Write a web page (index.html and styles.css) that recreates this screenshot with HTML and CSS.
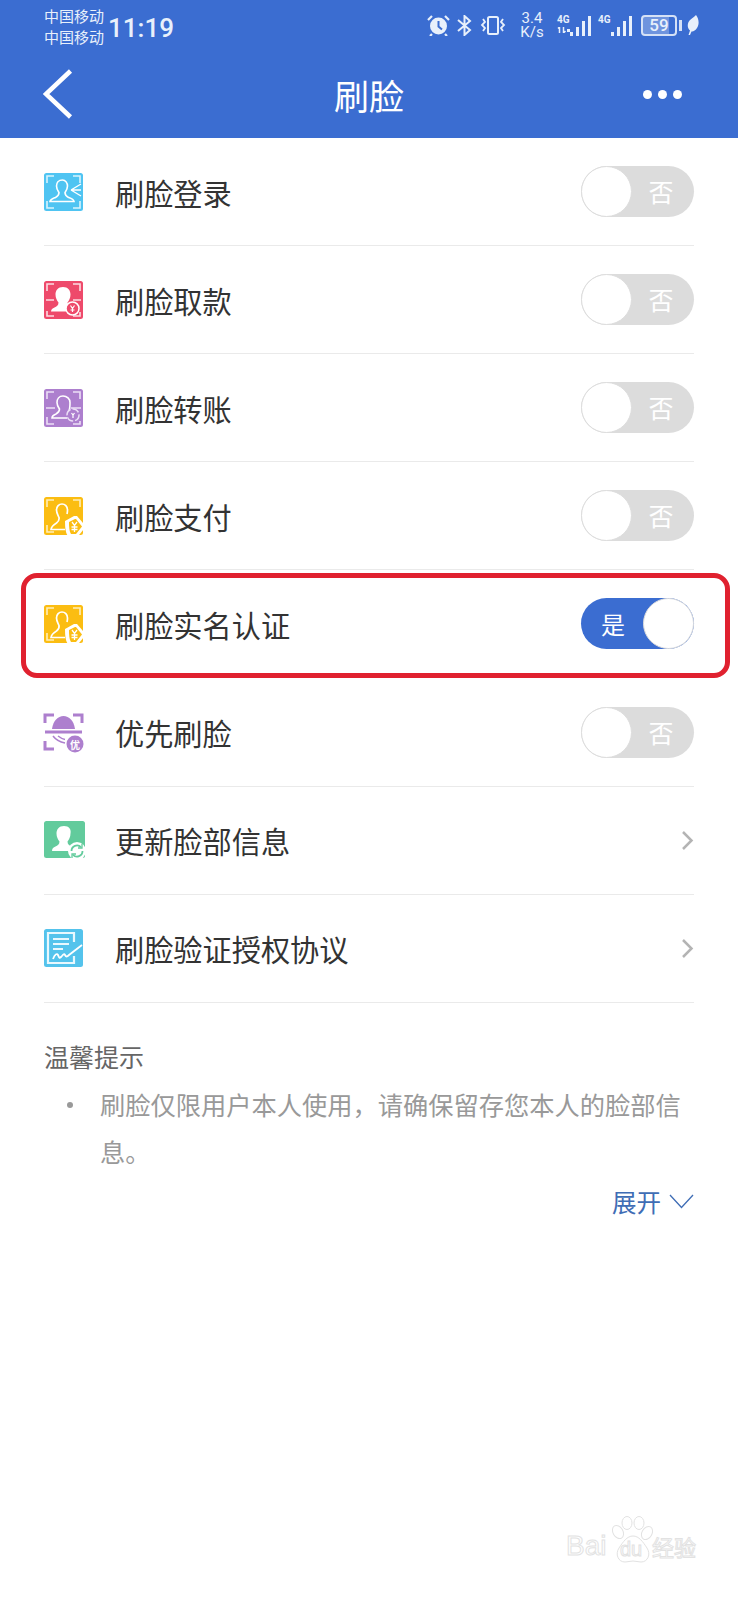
FILE: index.html
```html
<!DOCTYPE html>
<html lang="zh-CN">
<head>
<meta charset="UTF-8">
<meta name="viewport" content="width=device-width, initial-scale=1.0">
<title>刷脸</title>
<link rel="stylesheet" href="styles.css">
</head>
<body>
<div class="page">
  <header class="top">
    <div class="status">
      <div class="carrier"><span>中国移动</span><span>中国移动</span></div>
      <div class="clock">11:19</div>
      <div class="status-right">
        <svg class="st-alarm" width="23" height="22" viewBox="0 0 23 22"><circle cx="11.500" cy="12" r="8.500" fill="#e8f0fb"/><path d="M11.500 7v5.500l3.500 3" fill="none" stroke="#3b6dd1" stroke-width="2"/><path d="M1 6l4-4M22 6l-4-4M5 20l-2 2M18 20l2 2" stroke="#e8f0fb" stroke-width="2.200"/></svg>
        <svg class="st-bt" width="17" height="21" viewBox="0 0 17 21"><path d="M2 5l12 10-5.500 5V1L14 6 2 16" fill="none" stroke="#e8f0fb" stroke-width="2"/></svg>
        <svg class="st-vib" width="26" height="21" viewBox="0 0 26 21"><rect x="8" y="2" width="10" height="17" rx="1.500" fill="none" stroke="#e8f0fb" stroke-width="2"/><path d="M3 4l2 3-3 3 3 3-2 3M23 4l-2 3 3 3-3 3 2 3" fill="none" stroke="#e8f0fb" stroke-width="1.800"/></svg>
        <div class="speed"><span>3.4</span><span>K/s</span></div>
        <div class="signal signal-first">
          <div class="net"><span>4G</span><svg width="13" height="6" viewBox="0 0 13 6"><path d="M2.500 0v6M1 1.500L2.500 0M6.500 0v6l2-2" fill="none" stroke="#e8f0fb" stroke-width="1.500"/><rect x="10" y="2" width="3" height="3" fill="#e8f0fb"/></svg></div>
          <svg width="21" height="22" viewBox="0 0 21 22"><path d="M0 17h3v4H0zM6 12h3v9H6zM12 6h3v15h-3zM18 1h3v20h-3z" fill="#e8f0fb"/></svg>
        </div>
        <div class="signal signal-second">
          <div class="net"><span>4G</span></div>
          <svg width="21" height="22" viewBox="0 0 21 22"><path d="M0 17h3v4H0zM6 12h3v9H6zM12 6h3v15h-3zM18 1h3v20h-3z" fill="#e8f0fb"/></svg>
        </div>
        <div class="battery"><div class="battery-box"><span>59</span></div><div class="battery-nub"></div></div>
        <svg class="st-leaf" width="12" height="20" viewBox="0 0 12 20"><path d="M9 0c3 4 3.500 9 1 13-1.500 2.500-4 4-5.500 3.500L3 20H1.500l1.500-4.500C0 13 0 8 3 5c2-2 4.500-3 6-5z" fill="#e8f0fb"/></svg>
      </div>
    </div>
    <nav class="nav">
      <svg class="back" width="30" height="50" viewBox="0 0 30 50"><path d="M27.500 2L3 25l24.500 23" fill="none" stroke="#fff" stroke-width="4.500"/></svg>
      <h1 class="title">刷脸</h1>
      <div class="more"><i></i><i></i><i></i></div>
    </nav>
  </header>

  <main class="content">
    <ul class="list">
      <li class="row">
        <svg class="icon" width="39" height="38" viewBox="0 0 39 38"><rect width="39" height="38" rx="2.500" fill="#4fc4f2"/><path d="M3 10V3h7M29 3h7v7M3 28v7h7M29 35h7v-7" fill="none" stroke="#d8f3fd" stroke-width="1.600"/><path d="M18.500 7c-4 0-6 3-6 6 0 3 1.500 5 2.500 6.500 0 3-1.500 4-3.500 5-2 .8-5 1.500-5.500 4h24c-.5-2.500-3-3.200-5.500-4-2-1-3.500-2-3.500-5 1-1.500 2.500-3.500 2.500-6.500 0-3-2-6-5-6z" fill="none" stroke="#fff" stroke-width="1.600"/><path d="M27 17l10-6M27 17h10M27 17l10 6" fill="none" stroke="#fff" stroke-width="1.400"/></svg>
        <span class="label">刷脸登录</span>
        <div class="toggle"><div class="knob"></div><span class="toggle-text">否</span></div>
      </li>
      <li class="row">
        <svg class="icon" width="39" height="38" viewBox="0 0 39 38"><rect width="39" height="38" rx="2.500" fill="#ee4a6b"/><path d="M3 10V3h7M29 3h7v7M3 30v5h7M29 35h7v-4" fill="none" stroke="#fcdbe2" stroke-width="1.600"/><path d="M2 19h8M29 19h8" stroke="#fcdbe2" stroke-width="1.600"/><path d="M19 6c-5 0-7.500 3.500-7.500 7.500 0 3.500 1.500 6 3 8 0 3-2 4-4 5-2 .8-3.500 2-3.500 4h24c0-2-1.500-3.200-3.500-4-2-1-4-2-4-5 1.500-2 3-4.500 3-8C26.500 9.500 24 6 19 6z" fill="#fff"/><circle cx="28.500" cy="27.500" r="6.500" fill="#ee4a6b" stroke="#fff" stroke-width="1.500"/><path d="M26.500 24.500l2 3 2-3M28.500 27.500V31M26.500 29h4" fill="none" stroke="#fff" stroke-width="1.200"/></svg>
        <span class="label">刷脸取款</span>
        <div class="toggle"><div class="knob"></div><span class="toggle-text">否</span></div>
      </li>
      <li class="row">
        <svg class="icon" width="39" height="38" viewBox="0 0 39 38"><rect width="39" height="38" rx="2.500" fill="#ad7fce"/><path d="M3 10V3h7M29 3h7v7M3 28v7h7M29 35h7v-3" fill="none" stroke="#ecdff6" stroke-width="1.600"/><path d="M2 19h9M27 19h10" stroke="#ecdff6" stroke-width="1.600"/><path d="M19 7c-4 0-6 3-6 6.500 0 3 1.500 5 2.500 6.500 0 3-1.500 4-3.500 5-2 .8-4 2-4 4h15M25 22c1-2.500 1-6 1-8.500C26 10 23 7 19 7" fill="none" stroke="#fff" stroke-width="1.600"/><circle cx="29" cy="26" r="6" fill="none" stroke="#ecdff6" stroke-width="1.500" stroke-dasharray="7 2"/><path d="M27.500 24l1.500 2 1.500-2M29 26v3" fill="none" stroke="#fff" stroke-width="1.200"/></svg>
        <span class="label">刷脸转账</span>
        <div class="toggle"><div class="knob"></div><span class="toggle-text">否</span></div>
      </li>
      <li class="row">
        <svg class="icon" width="39" height="38" viewBox="0 0 39 38"><rect width="39" height="38" rx="2.500" fill="#fbbd12"/><path d="M3 10V3h7M29 3h7v7M3 28v7h7" fill="none" stroke="#ffeeb8" stroke-width="1.600"/><path d="M18 7c-3 0-5.500 2.500-5.500 6 0 3 1.500 5 2.500 7.500.5 2.500-.5 4-2.500 5.500-2.500 1.500-5 3-5.500 6.500h14M23 17c.3-1 .5-2.500.5-4 0-3.500-2.500-6-5.500-6" fill="none" stroke="#fff" stroke-width="1.700"/><path d="M21 24l9-5h3l9 10.500-9 11h-8c-3-3-4-8-4-16.500z" fill="#fff"/><path d="M25 25l6-3h1l6 7.500-6 7.500h-5c-1.500-2.500-2-6-2-12z" fill="#fbbd12"/><path d="M28 25l2.500 3.500 2.500-3.500M30.500 28.500V35M27.500 30h6M27.500 32.500h6" fill="none" stroke="#fff" stroke-width="1.300"/></svg>
        <span class="label">刷脸支付</span>
        <div class="toggle"><div class="knob"></div><span class="toggle-text">否</span></div>
      </li>
      <li class="row row-marked">
        <svg class="icon" width="39" height="38" viewBox="0 0 39 38"><rect width="39" height="38" rx="2.500" fill="#fbbd12"/><path d="M3 10V3h7M29 3h7v7M3 28v7h7" fill="none" stroke="#ffeeb8" stroke-width="1.600"/><path d="M18 7c-3 0-5.500 2.500-5.500 6 0 3 1.500 5 2.500 7.500.5 2.500-.5 4-2.500 5.500-2.500 1.500-5 3-5.500 6.500h14M23 17c.3-1 .5-2.500.5-4 0-3.500-2.500-6-5.500-6" fill="none" stroke="#fff" stroke-width="1.700"/><path d="M21 24l9-5h3l9 10.500-9 11h-8c-3-3-4-8-4-16.500z" fill="#fff"/><path d="M25 25l6-3h1l6 7.500-6 7.500h-5c-1.500-2.500-2-6-2-12z" fill="#fbbd12"/><path d="M28 25l2.500 3.500 2.500-3.500M30.500 28.500V35M27.500 30h6M27.500 32.500h6" fill="none" stroke="#fff" stroke-width="1.300"/></svg>
        <span class="label">刷脸实名认证</span>
        <div class="toggle toggle-on"><span class="toggle-text">是</span><div class="knob"></div></div>
        <div class="marker"></div>
      </li>
      <li class="row">
        <svg class="icon" width="39" height="38" viewBox="0 0 39 38"><path d="M1 10V2h9M29 2h9v8M1 28v8h9" fill="none" stroke="#ad7fce" stroke-width="3"/><path d="M8 16C9 8 14 3 19.500 3S30 8 31 16z" fill="#ad7fce"/><path d="M1 19h37" stroke="#ad7fce" stroke-width="3"/><path d="M9 23c3 4 7 6 12 7M14 23c2 1.500 4 3 7 3.500" fill="none" stroke="#ad7fce" stroke-width="1.500"/><circle cx="31" cy="31" r="8.500" fill="#ad7fce"/><text class="icon-you" x="31" y="35.500" text-anchor="middle">优</text></svg>
        <span class="label">优先刷脸</span>
        <div class="toggle"><div class="knob"></div><span class="toggle-text">否</span></div>
      </li>
      <li class="row">
        <svg class="icon" width="41" height="38" viewBox="0 0 41 38"><rect width="41" height="37" rx="2.500" fill="#62cb9c"/><path d="M20 5c-5 0-7.500 3.500-7.500 7.500 0 3.500 1.500 6 3 8 0 3-2 4-4 5-2 .8-3.500 2-3.500 4.500h23c0-2-1.500-3.700-3.500-4.500-2-1-4-2-4-5 1.500-2 3-4.500 3-8C27.500 8.500 25 5 20 5z" fill="#fff"/><circle cx="33" cy="30" r="9" fill="#fff"/><path d="M27.500 30a5.500 5.500 0 0 1 9.500-3.800M38.500 30a5.500 5.500 0 0 1-9.500 3.800" fill="none" stroke="#62cb9c" stroke-width="1.800"/><path d="M38 23v4h-4M28 37v-4h4" fill="none" stroke="#62cb9c" stroke-width="1.300"/></svg>
        <span class="label">更新脸部信息</span>
        <svg class="arrow" width="13" height="21" viewBox="0 0 13 21"><path d="M2 2l8.500 8.500L2 19" fill="none" stroke="#b4b4b4" stroke-width="2.500"/></svg>
      </li>
      <li class="row">
        <svg class="icon" width="39" height="38" viewBox="0 0 39 38"><rect width="39" height="38" rx="2.500" fill="#54c3ec"/><path d="M30 13V4H4v30h26v-7" fill="none" stroke="#e8f8fe" stroke-width="2.200"/><path d="M9 10h16M9 15h16M9 20h10" stroke="#e8f8fe" stroke-width="1.800"/><path d="M9 30c2-5 4-6 5-4s1 4 3 2 3-4 4-2 2 2 4 0l13-10" fill="none" stroke="#fff" stroke-width="1.800"/></svg>
        <span class="label">刷脸验证授权协议</span>
        <svg class="arrow" width="13" height="21" viewBox="0 0 13 21"><path d="M2 2l8.500 8.500L2 19" fill="none" stroke="#b4b4b4" stroke-width="2.500"/></svg>
      </li>
    </ul>

    <section class="tips">
      <h2 class="tips-title">温馨提示</h2>
      <ul class="tips-list">
        <li>刷脸仅限用户本人使用，请确保留存您本人的脸部信息。</li>
      </ul>
      <div class="expand">展开<svg width="25" height="15" viewBox="0 0 25 15"><path d="M1 1l11.500 12.500L24 1" fill="none" stroke="#3f6db5" stroke-width="1.300"/></svg></div>
    </section>
  </main>

  <div class="watermark">
    <span class="wm-bai">Bai</span>
    <svg class="wm-paw" width="44" height="48" viewBox="0 0 44 48"><g fill="none" stroke="#e2e2e2" stroke-width="1"><ellipse cx="9" cy="16" rx="5" ry="7" transform="rotate(-30 9 16)"/><ellipse cx="18" cy="7" rx="5" ry="6.500"/><ellipse cx="30" cy="7" rx="5" ry="6.500"/><ellipse cx="38" cy="17" rx="5" ry="7" transform="rotate(30 38 17)"/><path d="M24 20c-6 0-10 6-14 12-4 6-1 14 6 14 3 0 5-1 8-1s5 1 8 1c7 0 10-8 6-14-4-6-8-12-14-12z"/></g></svg>
    <span class="wm-du">du</span>
    <span class="wm-cn">经验</span>
  </div>
</div>
</body>
</html>
```

FILE: styles.css
```css
* {
  box-sizing: border-box;
}
body {
  margin: 0;
  background-color: #fff;
  font-family: "Noto Sans CJK SC", "Noto Sans", sans-serif;
}
ul {
  list-style: none;
  margin: 0;
  padding: 0;
}
.page {
  position: relative;
  width: 738px;
  height: 1600px;
  overflow: hidden;
  background-color: #fff;
}

/* Blue header */
.top {
  height: 138px;
  background-color: #3b6dd1;
  color: #fff;
}
.status {
  display: flex;
  align-items: center;
  height: 52px;
  padding: 0 0 0 44px;
}
.carrier {
  display: flex;
  flex-direction: column;
  width: 64px;
  font-size: 15px;
  line-height: 21px;
  color: #e8f0fb;
}
.clock {
  margin-top: 4px;
  font-family: Roboto, sans-serif;
  font-size: 26px;
  font-weight: 500;
  color: #e8f0fb;
}
.status-right {
  display: flex;
  align-items: center;
  margin-left: auto;
  padding: 0 39px 2px 0;
}
.st-bt {
  margin-left: 6px;
}
.st-vib {
  margin-left: 7px;
}
.speed {
  display: flex;
  flex-direction: column;
  align-items: center;
  width: 26px;
  margin-left: 13px;
  font-family: Roboto, sans-serif;
  font-size: 15px;
  line-height: 14px;
  color: #e8f0fb;
}
.signal {
  display: flex;
  align-items: flex-end;
  height: 24px;
}
.signal-first {
  margin-left: 12px;
}
.signal-second {
  margin-left: 7px;
}
.net {
  display: flex;
  flex-direction: column;
  width: 13px;
  height: 100%;
  font-family: Roboto, sans-serif;
  font-size: 10px;
  font-weight: 700;
  line-height: 14px;
  color: #e8f0fb;
}
.battery {
  display: flex;
  align-items: center;
  margin-left: 9px;
}
.battery-box {
  display: flex;
  align-items: center;
  justify-content: center;
  width: 36px;
  height: 21px;
  border: 2px solid #d5e1f6;
  border-radius: 4px;
  font-family: Roboto, sans-serif;
  font-size: 17px;
  font-weight: 500;
  line-height: 1;
  color: #e8f0fb;
  background: linear-gradient(to right, #6f94de 80%, transparent 80%);
}
.battery-nub {
  width: 3px;
  height: 11px;
  margin-left: 2px;
  background-color: #d5e1f6;
}
.st-leaf {
  margin-left: 5px;
}
.nav {
  display: grid;
  grid-template-columns: 1fr auto 1fr;
  align-items: center;
  height: 86px;
  padding: 0 56px 2px;
}
.back {
  margin-left: -13px;
}
.title {
  margin: 0;
  font-size: 35px;
  font-weight: 400;
  line-height: 1;
}
.more {
  display: flex;
  gap: 6px;
  justify-content: flex-end;
}
.more i {
  width: 9px;
  height: 9px;
  border-radius: 50%;
  background-color: #fff;
}

/* List rows */
.content {
  padding: 0 44px;
}
.row {
  position: relative;
  display: flex;
  align-items: center;
  height: 108.1px;
  border-bottom: 1px solid #eaeaea;
}
.icon {
  flex-shrink: 0;
  overflow: visible;
}
.label {
  position: absolute;
  left: 71px;
  font-size: 29.2px;
  line-height: 40px;
  color: #333;
}
.toggle {
  display: flex;
  align-items: center;
  width: 113px;
  height: 51px;
  margin-left: auto;
  border-radius: 26px;
  background-color: #dcdcdc;
}
.knob {
  width: 51px;
  height: 51px;
  flex-shrink: 0;
  border: 1px solid #ddd;
  border-radius: 50%;
  background-color: #fff;
}
.toggle-text {
  flex: 1;
  padding-right: 4px;
  text-align: center;
  font-size: 25px;
  line-height: 1;
  color: #fff;
}
.toggle-on {
  background-color: #3b6dd1;
}
.toggle-on .toggle-text {
  padding: 0 0 0 2px;
  font-size: 24px;
}
.arrow {
  margin-left: auto;
}

/* Red annotation round the 5th row */
.marker {
  position: absolute;
  top: 3px;
  left: -23px;
  right: -36px;
  height: 105px;
  border: 5px solid #e0212f;
  border-radius: 16px;
}

/* Tips */
.tips {
  padding-top: 35px;
}
.tips-title {
  margin: 0;
  font-size: 25px;
  font-weight: 400;
  line-height: 36px;
  color: #666;
}
.tips-list {
  margin-top: 7px;
  padding-left: 56px;
}
.tips-list li {
  position: relative;
  font-size: 25.25px;
  line-height: 47px;
  color: #999;
}
.tips-list li::before {
  content: "";
  position: absolute;
  left: -33px;
  top: 21px;
  width: 6px;
  height: 6px;
  border-radius: 50%;
  background-color: #999;
}
.expand {
  display: flex;
  align-items: center;
  justify-content: flex-end;
  gap: 8px;
  margin-top: 9px;
  font-size: 24.5px;
  line-height: 36px;
  color: #3f6db5;
}

/* Baidu watermark in the corner */
.watermark {
  position: absolute;
  top: 1516px;
  left: 566px;
  width: 140px;
  height: 48px;
}
.wm-paw {
  position: absolute;
  left: 43px;
  top: 0;
}
.wm-bai,
.wm-du,
.wm-cn {
  position: absolute;
  top: 15px;
  font-family: "Liberation Sans", sans-serif;
  font-size: 28px;
  line-height: 30px;
  color: transparent;
  -webkit-text-stroke: 1px #e2e2e2;
}
.wm-bai {
  left: 0;
}
.wm-du {
  left: 54px;
  top: 18px;
  font-size: 20px;
}
.wm-cn {
  left: 86px;
  font-family: "Noto Sans CJK SC", sans-serif;
  font-size: 22px;
}
.icon-you {
  font-size: 10px;
  font-weight: 700;
  fill: #fff;
  font-family: "Noto Sans CJK SC", sans-serif;
}
```
